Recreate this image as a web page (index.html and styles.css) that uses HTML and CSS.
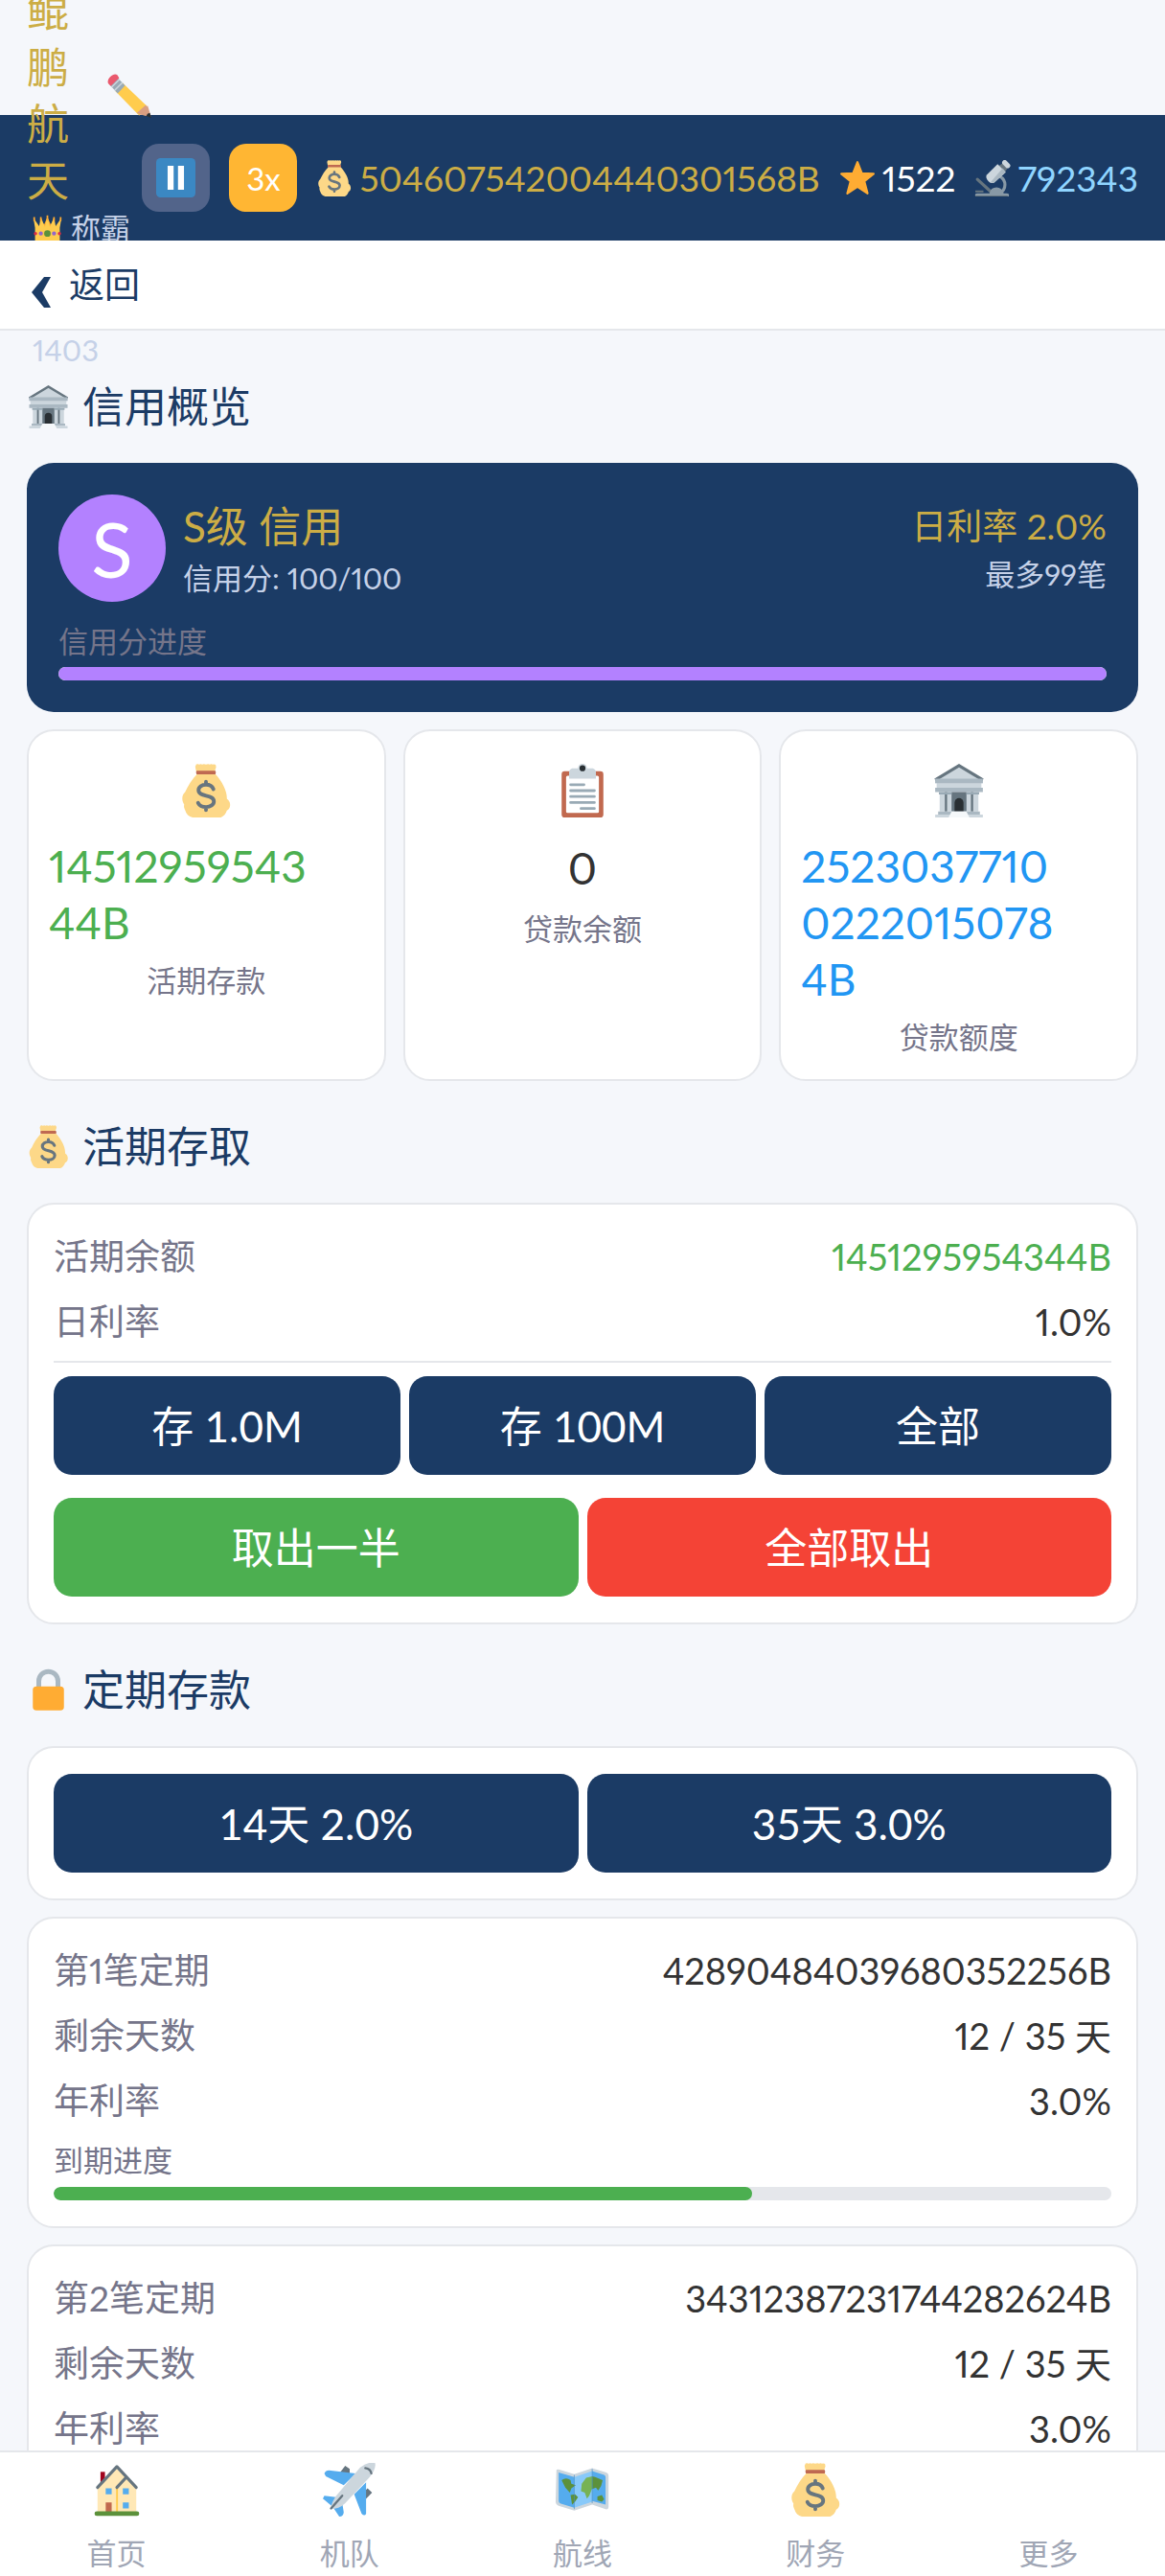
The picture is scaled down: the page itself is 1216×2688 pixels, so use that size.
FILE: index.html
```
<!DOCTYPE html>
<html lang="zh-CN">
<head>
  <meta charset="UTF-8" />
  <title>财务</title>
  <meta name="viewport" content="width=device-width, initial-scale=1.0" />
  <link rel="stylesheet" href="styles.css">
</head>
<body>
  <svg class="sprite" aria-hidden="true">
    <symbol id="i-bag" viewBox="0 0 36 36">
      <path fill="#fdd888" d="M11.500 .4q1-.6 2 .1q1-.7 2 0q1-.6 2.500 0q1.500-.6 2.500 0q1-.7 2 0q1-.6 2 .2l.3 1.500-.9 2.800.3 1.800c2.300 2.500 4.300 5.300 5.800 8.400 1.300 2.700 2.100 5.300 2 8.300 1.600 1.100 2.500 2.800 2.100 5-.2 1.500-1 2.400-2.100 2.900-.5 2-2.200 4-4 4.600H9c-2.500-.7-4.300-2.300-4.900-4.700-.5-1.200-1.200-2.400-.7-4-1.800-2.500-1.800-6.300.6-8.300C6 14.500 8.800 10 11.900 7L11.300 4.500 10.800 2z"/>
      <path fill="#bf6952" d="M11.700 4.700h12.600q.7 1.200 0 2.400H11.700q-.7-1.200 0-2.400z"/>
      <path fill="none" stroke="#67757f" stroke-width="2.500" stroke-linecap="round" d="M23 17c-.8-2-2.800-3-5-3-2.700 0-5 1.400-5 3.700 0 5 10.300 2.500 10.300 7.500 0 2.200-2.300 3.800-5.200 3.800-2.600 0-4.500-1-5.400-2.800M18 12v2M18 29v2"/>
    </symbol>
    <symbol id="i-bank" viewBox="0 0 36 36">
      <path fill="#ccd6dd" d="M18 1 34 10v3H2v-3z"/>
      <path fill="none" stroke="#66757f" stroke-width="2" d="M2 10.800 18 1.200 34 10.800"/>
      <path fill="#ccd6dd" d="M3 12h30v6H3z"/>
      <path fill="#aab8c2" d="M2 10h32v3H2zM2 16h32v3H2z"/>
      <path fill="#ccd6dd" d="M5 19h26v13H5z"/>
      <path fill="#66757f" d="M13 19h10v13H13zM8.500 19h1.500v13H8.500zM26 19h1.500v13H26z"/>
      <path fill="#99aab5" d="M4.500 19h8.500v1.500H4.500zM23 19h8.500v1.500H23z"/>
      <path fill="#292f33" d="M15 32v-6a3 3 0 0 1 6 0v6z"/>
      <path fill="#aab8c2" d="M4 32h28v2H4z"/>
      <path fill="#ccd6dd" d="M2 34h32v2H2z"/>
      <path fill="#f5f8fa" d="M13 32h10l2 4H11z"/>
    </symbol>
    <symbol id="i-clipboard" viewBox="0 0 36 36">
      <rect x="4" y="5" width="28" height="31" rx="2" fill="#c1694f"/>
      <rect x="7" y="8" width="22" height="25" rx="1" fill="#fff"/>
      <path fill="#ccd6dd" d="M25 3h-4a3 3 0 0 0-6 0h-4a3 3 0 0 0-2 2v5h18V5a3 3 0 0 0-2-2z"/>
      <circle cx="18" cy="3" r="2" fill="#292f33"/>
      <path stroke="#99aab5" stroke-width="1.800" stroke-linecap="round" d="M10 14h9M10 18h16M10 22h16M10 26h16M17 30h9"/>
    </symbol>
    <symbol id="i-lock" viewBox="0 0 36 36">
      <path fill="none" stroke="#aab8c2" stroke-width="4" d="M10 17V10.500a8 8 0 0 1 16 0V17"/>
      <rect x="5" y="15" width="26" height="20" rx="3" fill="#ffac33"/>
    </symbol>
    <symbol id="i-pencil" viewBox="0 0 36 36">
      <path fill="#ffcc4d" d="M12.500 7.500 33 27 30 31 26 34 6.500 14z"/>
      <path fill="#99aab5" d="M8 3 14.500 9.500 8.500 16 2 9z"/>
      <path stroke="#ccd6dd" stroke-width="1.200" d="M3.500 11 10 4.500M6 13.500 12.500 7"/>
      <path fill="#ea596e" d="M.7 7.800C0 6 .8 4 2.500 2.300S6.500-.2 8 .8l1.700 2.500L2.800 10z"/>
      <path fill="#d99e82" d="M33 26 35.700 35 25.500 33z"/>
      <path fill="#d99e82" d="M31.500 25.500 34 32l-2 2.500-8-2.500z"/>
      <path fill="#292f33" d="M34.800 31.800 36 36l-4.200-1.500q.6-2.300 3-2.700z"/>
    </symbol>
    <symbol id="i-crown" viewBox="0 0 36 36">
      <path fill="#ffac33" d="m11 17-2-10 5 6 4-9 4 9 5-6-2 10z"/>
      <path fill="#ffcc4d" d="M3 33V17L1 5l7 10 2-11 5 12 3-13 3 13 5-12 2 11 7-10-2 12v16q-15 3.500-30 0z"/>
      <circle cx="18" cy="24" r="4" fill="#5c913b"/>
      <circle cx="10" cy="24" r="2.500" fill="#9266cc"/>
      <circle cx="26" cy="24" r="2.500" fill="#9266cc"/>
      <circle cx="3.500" cy="24" r="2" fill="#dd2e44"/>
      <circle cx="32.500" cy="24" r="2" fill="#dd2e44"/>
      <path fill="#ffac33" d="M17 2h2v6h-2zM9 4h2v5H9zM25 4h2v5h-2zM1 4h2v5H1zM33 4h2v5h-2z"/>
    </symbol>
    <symbol id="i-pause" viewBox="0 0 36 36">
      <rect width="36" height="36" rx="4" fill="#3b88c3"/>
      <path fill="#fff" d="M10.500 7h5.500v22h-5.500zM20 7h5.500v22H20z"/>
    </symbol>
    <symbol id="i-star" viewBox="0 0 36 36">
      <path fill="#ffac33" stroke="#ffac33" stroke-width="2" stroke-linejoin="round" d="m18 2 4.300 11 11.700.6-9.200 7.300L28 33l-10-6.700L8 33l3.200-12.100L2 13.600 13.700 13z"/>
    </symbol>
    <symbol id="i-microscope" viewBox="0 0 36 36">
      <path fill="none" stroke="#8899a6" stroke-width="3" d="M25 16c7 4 7 13 0 17"/>
      <path stroke="#66757f" stroke-width="3" stroke-linecap="round" d="m3 19 13 12"/>
      <path fill="#8899a6" d="M1 36q-1-3 2-3h12q1-6 7-6 5 0 7 6h3q3 0 2 3z"/>
      <path fill="#66757f" d="M1 30h8v2H1zM1 35h32v1H1z"/>
      <path fill="#66757f" d="m24 6 6 6 3-4-5-5z"/>
      <path fill="#ccd6dd" d="m12 15 11-11 8 8-11 10q-3 2-6-1t-2-6z"/>
      <path fill="#aab8c2" d="m16 22 12-14 3 4-11 10q-2 1-4 0z"/>
      <path stroke="#ccd6dd" stroke-width="5" stroke-linecap="round" d="m30 2.500 3 3"/>
    </symbol>
    <symbol id="i-house" viewBox="0 0 36 36">
      <path fill="#a0041e" d="M7 6h3v8H7z"/>
      <path fill="#ffe8b6" d="M5 16 18 4l13 12v18H5z"/>
      <path fill="#ffcc4d" d="M17.500 16h1.200v18h-1.200z"/>
      <path fill="none" stroke="#66757f" stroke-width="2" stroke-linecap="round" stroke-linejoin="round" d="M5 16.500 18 2.500 31 16.500M18 16.500l6-6.500"/>
      <path fill="#55acee" d="M10.500 17h4v4h-4zM22 17h4v4h-4zM22 26.500h4v4h-4z"/>
      <path fill="#c1694f" d="M10.500 26.500h4V33h-4z"/>
      <rect x="3" y="32.500" width="30" height="3" rx="1.500" fill="#5c913b"/>
    </symbol>
    <symbol id="i-plane" viewBox="0 0 36 36">
      <path fill="#66757f" d="m11 7 4-5 3 2v4zM27 20l3-3 3 3-5 5z"/>
      <path fill="#55acee" d="M1 7q1-2 3-2l18 2-8 8L2 9zM29 13l-8 8 5 13q2 2 3 0zM1 22l8 1-3 6-6-5zM13 27l-6 3 4 6q3 0 3-3z"/>
      <path fill="#ccd6dd" d="M25 3q5-4 10-3 1 4-4 10L15 27q-4 4-10 4 1-5 4-9z"/>
      <path fill="none" stroke="#66757f" stroke-width="1.500" stroke-linecap="round" d="M13 22 5.500 30.500M28.500 3.500q3.500.5 4 3.500"/>
    </symbol>
    <symbol id="i-map" viewBox="0 0 36 36">
      <path fill="#ccd6dd" d="M.5 5q0-1 2-.5l10 3 12-4 9.500 3q1.500.5 1.500 2v21q0 2-2 1.500l-9-3-12 4-10-3Q0 28 0 26z"/>
      <path fill="#55acee" d="m2 6.500 10.500 3V30L4 27.500q-2-.5-2-2.500zM24.500 5.500l8 2.500q1 .4 1 1.500v18.500l-9-2.500z"/>
      <path fill="#88c9f9" d="m12.500 9.500 12-4v20.500l-12 4z"/>
      <path fill="#5c913b" d="M4 11.500q3-2 6 0l.5 2.500 3 1-3 2-1 3-3-3.500zM10 21.500l3-.5 2 2-2 3-2 2zM24.500 9l2 .5 5 2-1 4-2 3-1.500-2-2.500 1zM28 22.500l3-1 1.500 3-1.500 1.500-3-1z"/>
      <path fill="#77b255" d="m17.500 14 3-4 4-1v8l-2 5-1.500 2-1.500-4-2.500-1z"/>
      <path stroke="#4189c3" stroke-width=".4" d="M12.500 8v23M24.500 4v23"/>
    </symbol>
    <symbol id="i-back" viewBox="0 0 20 32">
      <path fill="#1b3b65" d="M13 0h7l-9 16 9 16h-7L0 16z"/>
    </symbol>
  </svg>

  <div class="app">
    <header class="topbar">
      <div class="brand">
        <div class="brand-row">
          <span class="brand-name">鲲鹏航天</span>
          <svg class="brand-edit"><use href="#i-pencil"/></svg>
        </div>
        <div class="brand-rank"><svg><use href="#i-crown"/></svg>称霸</div>
        <div class="brand-count">1403</div>
      </div>
      <div class="status">
        <button class="speed" aria-label="暂停"><svg><use href="#i-pause"/></svg></button>
        <button class="speed speed-on">3x</button>
        <span class="stat gold"><svg><use href="#i-bag"/></svg>504607542004440301568B</span>
        <span class="stat"><svg><use href="#i-star"/></svg>1522</span>
        <span class="stat sky"><svg><use href="#i-microscope"/></svg>792343</span>
      </div>
    </header>

    <nav class="backbar">
      <a href="#back"><svg><use href="#i-back"/></svg>返回</a>
    </nav>

    <main class="content">
      <h2><svg><use href="#i-bank"/></svg>信用概览</h2>

      <section class="credit">
        <div class="credit-top">
          <div class="grade">S</div>
          <div class="credit-info">
            <div class="credit-title">S级 信用</div>
            <div class="credit-sub">信用分: 100/100</div>
          </div>
          <div class="credit-rate">
            <div class="rate-title">日利率 2.0%</div>
            <div class="credit-sub">最多99笔</div>
          </div>
        </div>
        <div class="bar-label">信用分进度</div>
        <div class="bar"><div class="bar-fill purple" style="width: 100%"></div></div>
      </section>

      <section class="summary">
        <div class="card tile">
          <svg><use href="#i-bag"/></svg>
          <div class="amount green">14512959543<br>44B</div>
          <div class="tile-label">活期存款</div>
        </div>
        <div class="card tile">
          <svg><use href="#i-clipboard"/></svg>
          <div class="amount amount-short">0</div>
          <div class="tile-label">贷款余额</div>
        </div>
        <div class="card tile">
          <svg><use href="#i-bank"/></svg>
          <div class="amount blue">2523037710<br>0222015078<br>4B</div>
          <div class="tile-label">贷款额度</div>
        </div>
      </section>

      <h2><svg><use href="#i-bag"/></svg>活期存取</h2>

      <section class="card panel">
        <dl class="row"><dt>活期余额</dt><dd class="green">1451295954344B</dd></dl>
        <dl class="row"><dt>日利率</dt><dd>1.0%</dd></dl>
        <hr>
        <div class="actions">
          <button class="btn">存 1.0M</button>
          <button class="btn">存 100M</button>
          <button class="btn">全部</button>
        </div>
        <div class="actions actions-out">
          <button class="btn btn-green">取出一半</button>
          <button class="btn btn-red">全部取出</button>
        </div>
      </section>

      <h2><svg><use href="#i-lock"/></svg>定期存款</h2>

      <section class="card panel">
        <div class="actions">
          <button class="btn">14天 2.0%</button>
          <button class="btn">35天 3.0%</button>
        </div>
      </section>

      <section class="card panel">
        <dl class="row"><dt>第1笔定期</dt><dd>42890484039680352256B</dd></dl>
        <dl class="row"><dt>剩余天数</dt><dd>12 / 35 天</dd></dl>
        <dl class="row"><dt>年利率</dt><dd>3.0%</dd></dl>
        <div class="term">
          <div class="bar-label">到期进度</div>
          <div class="bar"><div class="bar-fill" style="width: 66%"></div></div>
        </div>
      </section>

      <section class="card panel panel-last">
        <dl class="row"><dt>第2笔定期</dt><dd>34312387231744282624B</dd></dl>
        <dl class="row"><dt>剩余天数</dt><dd>12 / 35 天</dd></dl>
        <dl class="row"><dt>年利率</dt><dd>3.0%</dd></dl>
      </section>
    </main>

    <nav class="tabs">
      <a href="#home"><svg><use href="#i-house"/></svg>首页</a>
      <a href="#fleet"><svg><use href="#i-plane"/></svg>机队</a>
      <a href="#routes"><svg><use href="#i-map"/></svg>航线</a>
      <a href="#finance"><svg><use href="#i-bag"/></svg>财务</a>
      <a href="#more"><svg></svg>更多</a>
    </nav>
  </div>
</body>
</html>
```

FILE: styles.css
```
* {
  box-sizing: border-box;
}

body {
  margin: 0;
  background: #f5f7fb;
  color: #333;
  font-family: Lato, "Noto Sans CJK SC", sans-serif;
  font-variant-numeric: proportional-nums;
}

a {
  color: inherit;
  text-decoration: none;
}

button {
  border: 0;
  color: #fff;
  font-family: inherit;
  cursor: pointer;
}

.sprite {
  display: none;
}

.app {
  display: flex;
  flex-direction: column;
  height: 100vh;
  padding-top: 120px;
  overflow: hidden;
}

.green { color: #4caf50; }
.blue { color: #2196f3; }

/* top bar */
.topbar {
  position: relative;
  z-index: 1;
  flex: none;
  display: flex;
  justify-content: space-between;
  align-items: center;
  height: 131px;
  padding: 0 28px;
  background: #1b3b65;
}

.brand {
  width: 110px;
  padding-bottom: 4px;
  color: #c5d1e8;
  font-size: 31px;
  line-height: 41px;
}

.brand-row {
  display: flex;
  align-items: center;
  gap: 40px;
}

.brand-name {
  width: 44px;
  color: #ccad45;
  font-size: 44px;
  line-height: 59px;
}

.brand-edit {
  flex: none;
  width: 46px;
  height: 46px;
}

.brand-rank {
  display: flex;
  align-items: center;
  gap: 9px;
  white-space: nowrap;
}

.brand-rank svg {
  width: 31px;
  height: 31px;
  margin-left: 6px;
}

.brand-count {
  margin-top: 86px;
  padding-left: 6px;
}

.status {
  display: flex;
  align-items: center;
  gap: 20px;
}

.speed {
  display: flex;
  justify-content: center;
  align-items: center;
  width: 71px;
  height: 71px;
  padding: 0;
  border-radius: 18px;
  background: #52648a;
  font-size: 33px;
}

.speed svg {
  width: 41px;
  height: 41px;
}

.speed-on {
  background: #ffb633;
}

.stat {
  display: flex;
  align-items: center;
  gap: 7px;
  color: #fff;
  font-size: 37px;
  line-height: 50px;
}

.stat svg {
  width: 38px;
  height: 38px;
}

.gold { color: #ccad45; }
.sky { color: #90d5ff; }

.backbar {
  position: relative;
  z-index: 2;
  flex: none;
  height: 94px;
  padding: 0 33px;
  border-bottom: 2px solid #e5e7eb;
  background: #fff;
}

.backbar a {
  display: inline-flex;
  align-items: center;
  gap: 19px;
  color: #1b3b65;
  font-size: 37px;
  line-height: 92px;
}

.backbar svg {
  width: 20px;
  height: 32px;
  margin-top: 16px;
}

/* page */
.content {
  flex: 1;
  min-height: 0;
  padding: 11px 28px 0;
  overflow: hidden;
}

h2 {
  display: flex;
  align-items: center;
  gap: 13px;
  margin: 39px 0 30px;
  color: #1b3b65;
  font-size: 44px;
  font-weight: 400;
  line-height: 58px;
}

h2 svg {
  width: 45px;
  height: 45px;
}

.credit {
  padding: 33px;
  border-radius: 28px;
  background: #1b3b65;
}

.credit-top {
  display: flex;
  align-items: center;
  gap: 18px;
  margin-bottom: 20px;
}

.grade {
  width: 112px;
  height: 112px;
  border-radius: 50%;
  background: #b381ff;
  color: #fff;
  font-size: 80px;
  line-height: 112px;
  text-align: center;
}

.credit-title {
  color: #ccad45;
  font-size: 44px;
  line-height: 62px;
}

.credit-sub {
  color: #c5d1e8;
  font-size: 31px;
  line-height: 46px;
}

.credit-rate {
  margin-left: auto;
  text-align: right;
}

.rate-title {
  color: #ccad45;
  font-size: 37px;
  line-height: 54px;
}

.bar-label {
  margin-bottom: 6px;
  color: #75758a;
  font-size: 31px;
  line-height: 42px;
}

.bar {
  height: 14px;
  border-radius: 7px;
  background: #e5e7eb;
  overflow: hidden;
}

.bar-fill {
  height: 100%;
  border-radius: 7px;
  background: #4caf50;
}

.bar-fill.purple {
  background: #b381ff;
}

.card {
  border: 2px solid #e5e7eb;
  border-radius: 28px;
  background: #fff;
}

.summary {
  display: grid;
  grid-template-columns: repeat(3, 1fr);
  gap: 18px;
  margin-top: 18px;
}

.tile {
  display: flex;
  flex-direction: column;
  align-items: center;
  padding: 34px 21px 23px;
}

.tile svg {
  width: 56px;
  height: 56px;
  margin-bottom: 21px;
}

.amount {
  align-self: flex-start;
  font-size: 46px;
  line-height: 59px;
}

.amount-short {
  align-self: center;
  line-height: 64px;
}

.tile-label {
  margin-top: 10px;
  color: #75758a;
  font-size: 31px;
  line-height: 42px;
}

.panel {
  display: flex;
  flex-direction: column;
  gap: 14px;
  padding: 27px 26px;
}

.panel + .panel {
  margin-top: 17px;
}

.panel-last {
  min-height: 325px;
}

.row {
  display: flex;
  justify-content: space-between;
  margin: 0;
  font-size: 37px;
  line-height: 54px;
}

.row dt {
  color: #75758a;
}

.row dd {
  margin: 0;
  font-size: 38px;
}

hr {
  width: 100%;
  height: 2px;
  margin: 0;
  border: 0;
  background: #e5e7eb;
}

.actions {
  display: flex;
  gap: 9px;
}

.actions-out {
  margin-top: 10px;
}

.term .bar-label {
  margin-bottom: 7px;
}

.btn {
  flex: 1;
  height: 103px;
  padding: 0 6px 4px;
  border-radius: 19px;
  background: #1b3b65;
  font-size: 44px;
}

.btn-green { background: #4caf50; }
.btn-red { background: #f44336; }

/* bottom tabs */
.tabs {
  flex: none;
  display: flex;
  height: 131px;
  border-top: 2px solid #e5e7eb;
  background: #fff;
}

.tabs a {
  flex: 1;
  display: flex;
  flex-direction: column;
  align-items: center;
  gap: 17px;
  padding-top: 11px;
  color: #a0a6b5;
  font-size: 31px;
  line-height: 42px;
}

.tabs svg {
  width: 56px;
  height: 56px;
}
```
